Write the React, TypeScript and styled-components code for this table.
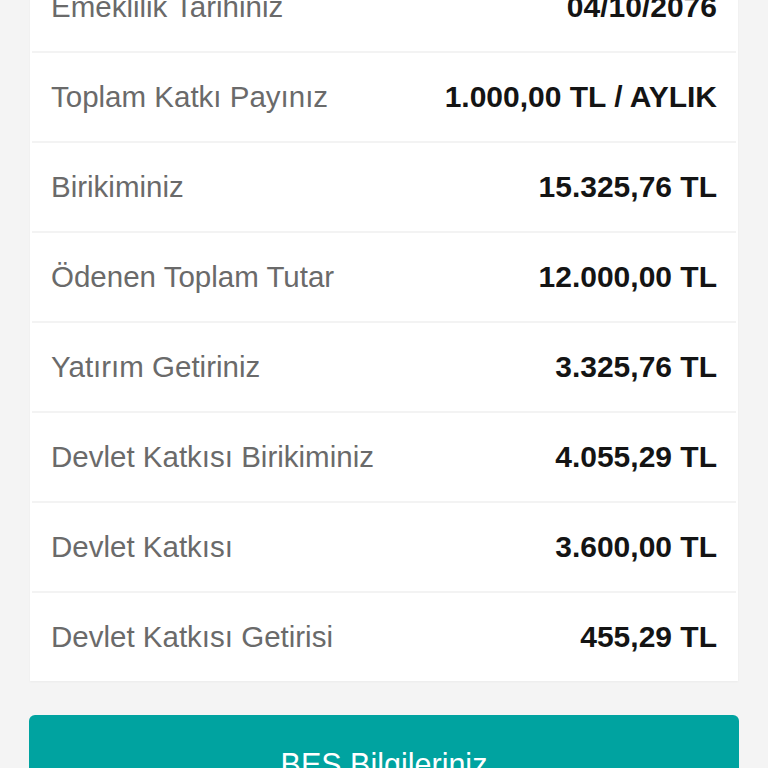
import React from "react";
import styled, { createGlobalStyle } from "styled-components";

const Global = createGlobalStyle`
  html, body {
    margin: 0;
    padding: 0;
    background: #f4f4f4;
    overflow: hidden;
  }
  body {
    font-family: "Liberation Sans", Arial, sans-serif;
    -webkit-font-smoothing: antialiased;
  }
`;

const Page = styled.div`
  display: flex;
  flex-direction: column;
  padding: 0 30px 0 30px;
  margin-top: -37px;
`;

const Card = styled.div`
  background: #ffffff;
  display: flex;
  flex-direction: column;
  box-shadow: 0 1px 2px rgba(0, 0, 0, 0.04);
`;

const Row = styled.div<{ $first?: boolean }>`
  height: 88px;
  display: flex;
  align-items: center;
  justify-content: space-between;
  padding: 0 19px;
  border-top: ${(p) => (p.$first ? "none" : "2px solid #f3f3f3")};
  margin: 0 2px;
`;

const Label = styled.span`
  font-size: 29.5px;
  color: #6a6a6a;
`;

const Value = styled.span`
  font-size: 30px;
  font-weight: 700;
  color: #141414;
`;

const Button = styled.button`
  margin: 34px -1px 0 -1px;
  height: 98px;
  border: none;
  border-radius: 6px;
  background: #00a3a0;
  color: #ffffff;
  font-family: "Liberation Sans", Arial, sans-serif;
  font-size: 30.5px;
  display: flex;
  align-items: center;
  justify-content: center;
  padding: 0;
`;

const rows: [string, string][] = [
  ["Emeklilik Tarihiniz", "04/10/2076"],
  ["Toplam Katkı Payınız", "1.000,00 TL / AYLIK"],
  ["Birikiminiz", "15.325,76 TL"],
  ["Ödenen Toplam Tutar", "12.000,00 TL"],
  ["Yatırım Getiriniz", "3.325,76 TL"],
  ["Devlet Katkısı Birikiminiz", "4.055,29 TL"],
  ["Devlet Katkısı", "3.600,00 TL"],
  ["Devlet Katkısı Getirisi", "455,29 TL"],
];

export default function App() {
  return (
    <>
      <Global />
      <Page>
        <Card>
          {rows.map(([l, v], i) => (
            <Row key={l} $first={i === 0}>
              <Label>{l}</Label>
              <Value>{v}</Value>
            </Row>
          ))}
        </Card>
        <Button>BES Bilgileriniz</Button>
      </Page>
    </>
  );
}
